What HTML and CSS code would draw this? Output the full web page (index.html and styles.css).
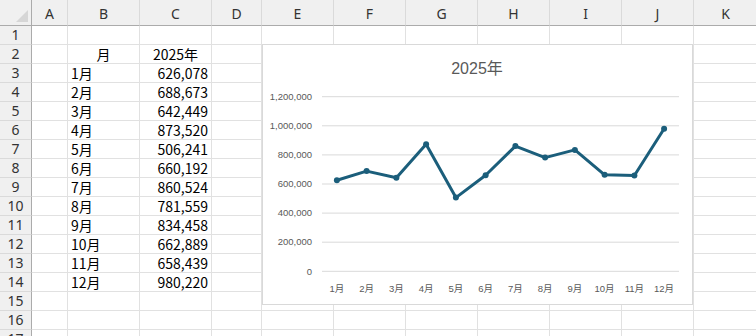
FILE: index.html
```html
<!DOCTYPE html>
<html lang="ja">
  <head>
    <meta charset="UTF-8" />
    <meta name="viewport" content="width=device-width, initial-scale=1.0" />
    <title>2025年</title>
    <link rel="stylesheet" href="styles.css">
  </head>

  <body>
    <div class="book">
      <!-- シート -->
      <div class="sheet">
        <!-- 列見出し -->
        <div class="corner"></div>
        <div class="col-head">A</div>
        <div class="col-head">B</div>
        <div class="col-head">C</div>
        <div class="col-head">D</div>
        <div class="col-head">E</div>
        <div class="col-head">F</div>
        <div class="col-head">G</div>
        <div class="col-head">H</div>
        <div class="col-head">I</div>
        <div class="col-head">J</div>
        <div class="col-head">K</div>

        <div class="row-head">1</div>
        <div class="cell"></div><div class="cell"></div><div class="cell"></div><div class="cell"></div><div class="cell"></div><div class="cell"></div><div class="cell"></div><div class="cell"></div><div class="cell"></div><div class="cell"></div><div class="cell"></div>

        <div class="row-head">2</div>
        <div class="cell"></div><div class="cell center">月</div><div class="cell center">2025年</div><div class="cell"></div><div class="cell"></div><div class="cell"></div><div class="cell"></div><div class="cell"></div><div class="cell"></div><div class="cell"></div><div class="cell"></div>

        <div class="row-head">3</div>
        <div class="cell"></div><div class="cell">1月</div><div class="cell num">626,078</div><div class="cell"></div><div class="cell"></div><div class="cell"></div><div class="cell"></div><div class="cell"></div><div class="cell"></div><div class="cell"></div><div class="cell"></div>

        <div class="row-head">4</div>
        <div class="cell"></div><div class="cell">2月</div><div class="cell num">688,673</div><div class="cell"></div><div class="cell"></div><div class="cell"></div><div class="cell"></div><div class="cell"></div><div class="cell"></div><div class="cell"></div><div class="cell"></div>

        <div class="row-head">5</div>
        <div class="cell"></div><div class="cell">3月</div><div class="cell num">642,449</div><div class="cell"></div><div class="cell"></div><div class="cell"></div><div class="cell"></div><div class="cell"></div><div class="cell"></div><div class="cell"></div><div class="cell"></div>

        <div class="row-head">6</div>
        <div class="cell"></div><div class="cell">4月</div><div class="cell num">873,520</div><div class="cell"></div><div class="cell"></div><div class="cell"></div><div class="cell"></div><div class="cell"></div><div class="cell"></div><div class="cell"></div><div class="cell"></div>

        <div class="row-head">7</div>
        <div class="cell"></div><div class="cell">5月</div><div class="cell num">506,241</div><div class="cell"></div><div class="cell"></div><div class="cell"></div><div class="cell"></div><div class="cell"></div><div class="cell"></div><div class="cell"></div><div class="cell"></div>

        <div class="row-head">8</div>
        <div class="cell"></div><div class="cell">6月</div><div class="cell num">660,192</div><div class="cell"></div><div class="cell"></div><div class="cell"></div><div class="cell"></div><div class="cell"></div><div class="cell"></div><div class="cell"></div><div class="cell"></div>

        <div class="row-head">9</div>
        <div class="cell"></div><div class="cell">7月</div><div class="cell num">860,524</div><div class="cell"></div><div class="cell"></div><div class="cell"></div><div class="cell"></div><div class="cell"></div><div class="cell"></div><div class="cell"></div><div class="cell"></div>

        <div class="row-head">10</div>
        <div class="cell"></div><div class="cell">8月</div><div class="cell num">781,559</div><div class="cell"></div><div class="cell"></div><div class="cell"></div><div class="cell"></div><div class="cell"></div><div class="cell"></div><div class="cell"></div><div class="cell"></div>

        <div class="row-head">11</div>
        <div class="cell"></div><div class="cell">9月</div><div class="cell num">834,458</div><div class="cell"></div><div class="cell"></div><div class="cell"></div><div class="cell"></div><div class="cell"></div><div class="cell"></div><div class="cell"></div><div class="cell"></div>

        <div class="row-head">12</div>
        <div class="cell"></div><div class="cell">10月</div><div class="cell num">662,889</div><div class="cell"></div><div class="cell"></div><div class="cell"></div><div class="cell"></div><div class="cell"></div><div class="cell"></div><div class="cell"></div><div class="cell"></div>

        <div class="row-head">13</div>
        <div class="cell"></div><div class="cell">11月</div><div class="cell num">658,439</div><div class="cell"></div><div class="cell"></div><div class="cell"></div><div class="cell"></div><div class="cell"></div><div class="cell"></div><div class="cell"></div><div class="cell"></div>

        <div class="row-head">14</div>
        <div class="cell"></div><div class="cell">12月</div><div class="cell num">980,220</div><div class="cell"></div><div class="cell"></div><div class="cell"></div><div class="cell"></div><div class="cell"></div><div class="cell"></div><div class="cell"></div><div class="cell"></div>

        <div class="row-head">15</div>
        <div class="cell"></div><div class="cell"></div><div class="cell"></div><div class="cell"></div><div class="cell"></div><div class="cell"></div><div class="cell"></div><div class="cell"></div><div class="cell"></div><div class="cell"></div><div class="cell"></div>

        <div class="row-head">16</div>
        <div class="cell"></div><div class="cell"></div><div class="cell"></div><div class="cell"></div><div class="cell"></div><div class="cell"></div><div class="cell"></div><div class="cell"></div><div class="cell"></div><div class="cell"></div><div class="cell"></div>

        <div class="row-head">17</div>
        <div class="cell"></div><div class="cell"></div><div class="cell"></div><div class="cell"></div><div class="cell"></div><div class="cell"></div><div class="cell"></div><div class="cell"></div><div class="cell"></div><div class="cell"></div><div class="cell"></div>
      </div>

      <!-- グラフ（セルの上に浮かぶ） -->
      <div class="chart">
        <svg class="chart-svg" width="431" height="261" viewBox="0 0 431 261">
          <text class="chart-title" x="215" y="30" text-anchor="middle">2025年</text>

          <!-- 目盛線 -->
          <g class="grid">
            <line x1="60" y1="52.7" x2="417" y2="52.7" />
            <line x1="60" y1="81.8" x2="417" y2="81.8" />
            <line x1="60" y1="110.9" x2="417" y2="110.9" />
            <line x1="60" y1="140" x2="417" y2="140" />
            <line x1="60" y1="169.1" x2="417" y2="169.1" />
            <line x1="60" y1="198.2" x2="417" y2="198.2" />
            <line x1="60" y1="227.3" x2="417" y2="227.3" />
          </g>

          <!-- 縦軸ラベル -->
          <g class="axis" text-anchor="end">
            <text x="50" y="56">1,200,000</text>
            <text x="50" y="85">1,000,000</text>
            <text x="50" y="114">800,000</text>
            <text x="50" y="143">600,000</text>
            <text x="50" y="172">400,000</text>
            <text x="50" y="201">200,000</text>
            <text x="50" y="230.5">0</text>
          </g>

          <!-- 横軸ラベル -->
          <g class="axis" text-anchor="middle">
            <text x="74.9" y="247.5">1月</text>
            <text x="104.6" y="247.5">2月</text>
            <text x="134.4" y="247.5">3月</text>
            <text x="164.1" y="247.5">4月</text>
            <text x="193.9" y="247.5">5月</text>
            <text x="223.6" y="247.5">6月</text>
            <text x="253.4" y="247.5">7月</text>
            <text x="283.1" y="247.5">8月</text>
            <text x="312.9" y="247.5">9月</text>
            <text x="342.6" y="247.5">10月</text>
            <text x="372.4" y="247.5">11月</text>
            <text x="402.1" y="247.5">12月</text>
          </g>

          <!-- 折れ線 -->
          <polyline class="series" points="74.9,136.2 104.6,127.1 134.4,133.8 164.1,100.2 193.9,153.6 223.6,131.2 253.4,102.1 283.1,113.6 312.9,105.9 342.6,130.8 372.4,131.5 402.1,84.7" />
          <g class="marker">
            <circle cx="74.9" cy="136.2" r="3" />
            <circle cx="104.6" cy="127.1" r="3" />
            <circle cx="134.4" cy="133.8" r="3" />
            <circle cx="164.1" cy="100.2" r="3" />
            <circle cx="193.9" cy="153.6" r="3" />
            <circle cx="223.6" cy="131.2" r="3" />
            <circle cx="253.4" cy="102.1" r="3" />
            <circle cx="283.1" cy="113.6" r="3" />
            <circle cx="312.9" cy="105.9" r="3" />
            <circle cx="342.6" cy="130.8" r="3" />
            <circle cx="372.4" cy="131.5" r="3" />
            <circle cx="402.1" cy="84.7" r="3" />
          </g>
        </svg>
      </div>
    </div>
  </body>
</html>
```

FILE: styles.css
```css
* {
  margin: 0px;
  padding: 0px;
  box-sizing: border-box;
}

body {
  background-color: #fff;
  overflow: hidden;
}

.book {
  position: relative;
  width: 756px;
  height: 336px;
  overflow: hidden;
}

/* シートは grid で並べる */
.sheet {
  display: grid;
  grid-template-columns: 32px 36px 72px 72px 50px 72px 72px 72px 72px 72px 72px 64px;
  grid-template-rows: 26px;
  grid-auto-rows: 19px;
  font-family: "Noto Sans CJK JP", "Noto Sans", sans-serif;
  font-size: 14px;
  color: #000;
}

/* 見出し */
.corner,
.col-head,
.row-head {
  background-color: #f0f0f0;
  color: #333;
  font-family: "Noto Sans", "Noto Sans CJK JP", sans-serif;
  font-size: 14px;
  display: flex;
  align-items: center;
  justify-content: center;
}

.corner {
  position: relative;
  border-right: 1px solid #ababab;
  border-bottom: 1px solid #ababab;
}

/* 左上の三角 */
.corner::after {
  content: '';
  position: absolute;
  right: 3px;
  bottom: 3px;
  width: 0px;
  height: 0px;
  border: 6px solid transparent;
  border-right-color: #d6d6d6;
  border-bottom-color: #d6d6d6;
}

.col-head {
  border-right: 1px solid #dadada;
  border-bottom: 1px solid #ababab;
  padding-top: 2px;
}

.row-head {
  border-right: 1px solid #ababab;
  border-bottom: 1px solid #dadada;
  line-height: 18px;
}

.cell {
  border-right: 1px solid #e1e1e1;
  border-bottom: 1px solid #e1e1e1;
  line-height: 18px;
  padding: 0px 3px;
  white-space: nowrap;
  overflow: hidden;
}

.center {
  text-align: center;
}

.num {
  text-align: right;
}

/* グラフ */
.chart {
  position: absolute;
  left: 262px;
  top: 44px;
  width: 431px;
  height: 261px;
  background-color: #fff;
  border: 1px solid #d9d9d9;
}

.chart-svg {
  position: absolute;
  left: -1px;
  top: -1px;
  display: block;
}

.chart-title {
  font-family: "Liberation Sans", "Noto Sans CJK JP", sans-serif;
  font-size: 16px;
  fill: #595959;
}

.grid line {
  stroke: #d9d9d9;
  stroke-width: 1;
}

.axis text {
  font-family: "Liberation Sans", "Noto Sans CJK JP", sans-serif;
  font-size: 9.5px;
  fill: #595959;
}

.series {
  fill: none;
  stroke: #1b5e7b;
  stroke-width: 3;
  stroke-linejoin: round;
}

.marker circle {
  fill: #1b5e7b;
}
```
